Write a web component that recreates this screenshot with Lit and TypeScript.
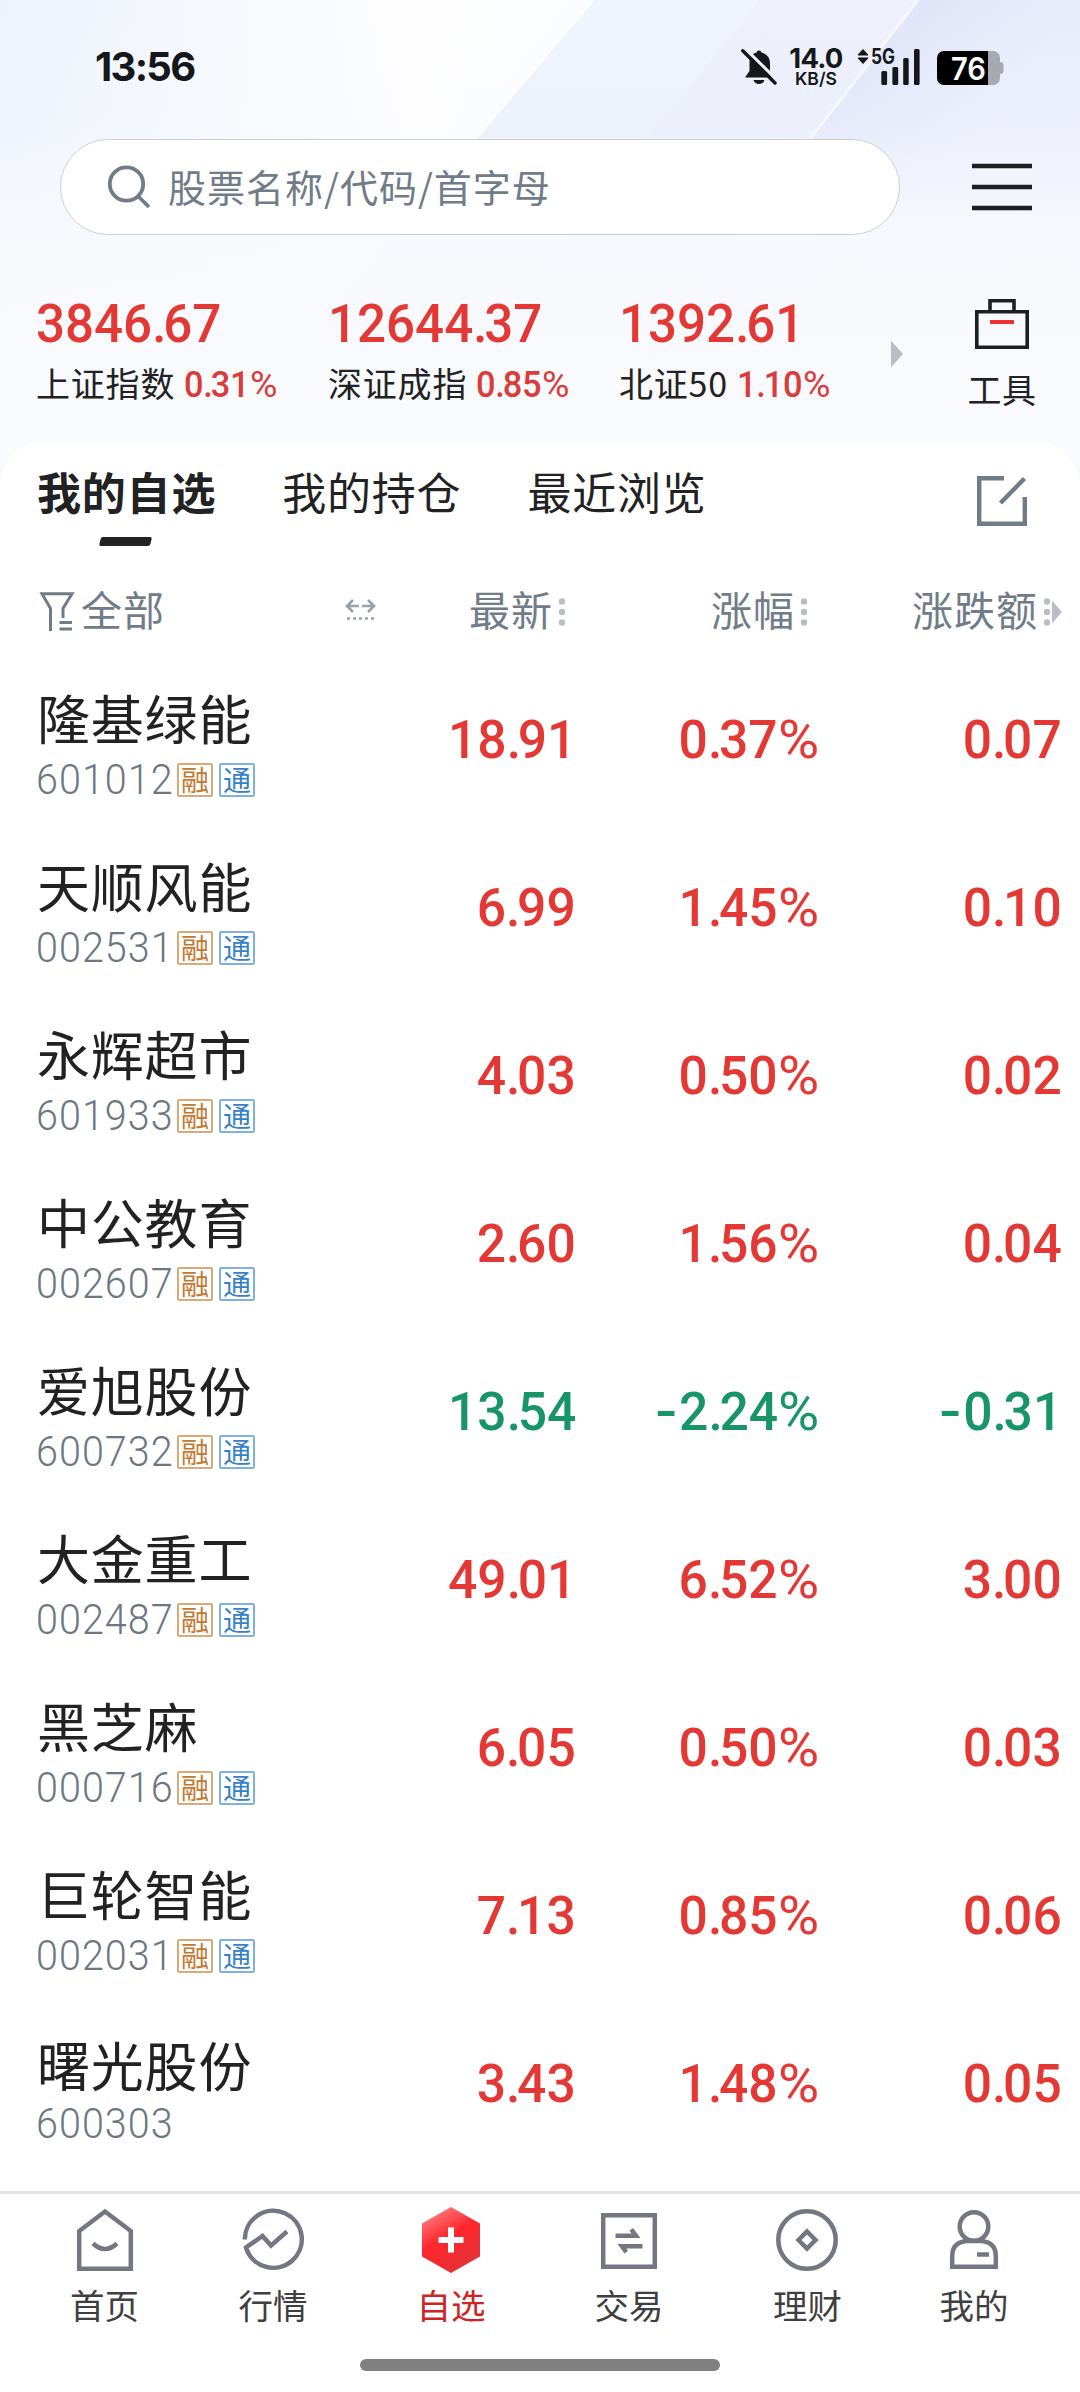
import { LitElement, html, svg, css, nothing } from "lit";
import { customElement, property } from "lit/decorators.js";

interface Quote {
  name: string;
  code: string;
  price: string;
  pct: string;
  diff: string;
  tags: boolean;
}

const INDICES = [
  { value: "3846.67", name: "上证指数", pct: "0.31%" },
  { value: "12644.37", name: "深证成指", pct: "0.85%" },
  { value: "1392.61", name: "北证50", pct: "1.10%" },
];

const QUOTES: Quote[] = [
  { name: "隆基绿能", code: "601012", price: "18.91", pct: "0.37%", diff: "0.07", tags: true },
  { name: "天顺风能", code: "002531", price: "6.99", pct: "1.45%", diff: "0.10", tags: true },
  { name: "永辉超市", code: "601933", price: "4.03", pct: "0.50%", diff: "0.02", tags: true },
  { name: "中公教育", code: "002607", price: "2.60", pct: "1.56%", diff: "0.04", tags: true },
  { name: "爱旭股份", code: "600732", price: "13.54", pct: "-2.24%", diff: "-0.31", tags: true },
  { name: "大金重工", code: "002487", price: "49.01", pct: "6.52%", diff: "3.00", tags: true },
  { name: "黑芝麻", code: "000716", price: "6.05", pct: "0.50%", diff: "0.03", tags: true },
  { name: "巨轮智能", code: "002031", price: "7.13", pct: "0.85%", diff: "0.06", tags: true },
  { name: "曙光股份", code: "600303", price: "3.43", pct: "1.48%", diff: "0.05", tags: false },
];

const cjk = css`"Noto Sans CJK SC", sans-serif`;

/** A condensed figure whose point, percent sign and minus sign have their own spacing. */
@customElement("stock-figure")
class StockFigure extends LitElement {
  @property() value = "";

  static styles = css`
    :host {
      display: inline-block;
      font-family: Roboto, sans-serif;
      font-weight: 500;
      line-height: 1;
      white-space: nowrap;
      transform: scaleX(0.955);
      transform-origin: left;
    }
    .point { letter-spacing: -0.063em; }
    .percent { display: inline-block; font-weight: 400; transform: scaleX(1.09); transform-origin: left; margin-right: 0.065em; }
    .minus { display: inline-block; transform: scaleX(1.25); transform-origin: right; margin-right: 0.04em; }
  `;

  render() {
    const parts = this.value.split(/([.%-])/).filter((p) => p);
    return parts.map((p) =>
      p === "." ? html`<span class="point">.</span>`
      : p === "%" ? html`<span class="percent">%</span>`
      : p === "-" ? html`<span class="minus">-</span>`
      : p);
  }
}

@customElement("status-bar")
class StatusBar extends LitElement {
  static styles = css`
    :host { display: flex; justify-content: space-between; height: 139px; box-sizing: border-box; padding: 46px 76px 0 95px; color: #15171a; }
    .time { font: 700 40px/41px Inter, sans-serif; letter-spacing: -1.7px; }
    .right { display: flex; align-items: flex-start; padding-top: 2px; }
    svg { display: block; }
    .bell { margin-right: 12px; }
    .speed { display: flex; flex-direction: column; align-items: center; width: 54px; margin-right: 14px; font-family: Inter, sans-serif; font-weight: 700; }
    .rate { font-size: 27.5px; line-height: 22px; letter-spacing: -0.8px; margin-top: -1px; }
    .unit { font-size: 17.5px; line-height: 16px; font-weight: 600; margin-top: 2px; }
    .signal { margin-top: -8px; }
    .battery { margin-left: 17px; }
  `;

  render() {
    return html`
      <div class="time">13:56</div>
      <div class="right">
        <svg class="bell" width="36" height="38" viewBox="0 0 36 38">
          <path d="M18 2.5c1.4 0 2.2.8 2.3 2 5.3 1.1 8.7 5 8.700 10.500v8l3.500 6.500H4l4.500-6.500v-8c0-5.500 2.200-9.400 7.200-10.500.1-1.200.9-2 2.300-2z" fill="#15171a"/>
          <path d="M12.500 32h11c-.8 2.700-2.800 4-5.500 4s-4.700-1.300-5.500-4z" fill="#15171a"/>
          <path d="M3 -.5L37 33" stroke="#eef1fb" stroke-width="3.200"/>
          <path d="M1.800 2.800L34 35" stroke="#15171a" stroke-width="3.400" stroke-linecap="round"/>
        </svg>
        <div class="speed"><span class="rate">14.0</span><span class="unit">KB/S</span></div>
        <svg class="signal" width="63" height="46" viewBox="0 -8 63 46">
          <path d="M6 1.500l5 5.500H1zM1 10h10l-5 5.500z" fill="#15171a" stroke="#15171a" stroke-linejoin="round"/>
          <text x="14" y="16" font-family="Inter, sans-serif" font-weight="700" font-size="21" textLength="24" lengthAdjust="spacingAndGlyphs" fill="#15171a">5G</text>
          <rect x="24.300" y="23" width="5.800" height="14" rx="1.500" fill="#15171a"/>
          <rect x="35.400" y="19" width="5.800" height="18" rx="1.500" fill="#15171a"/>
          <rect x="46.200" y="10" width="5.500" height="27" rx="1.500" fill="#15171a"/>
          <rect x="57" y="1" width="5.600" height="36" rx="1.500" fill="#15171a"/>
        </svg>
        <svg class="battery" width="67" height="38" viewBox="0 0 67 38">
          <path d="M51 3h5a7 7 0 0 1 7 7v4h.5a3 3 0 0 1 3 3v6a3 3 0 0 1-3 3H63v4a7 7 0 0 1-7 7h-5z" fill="#a6a9b1"/>
          <path d="M7 3h44v34H7a7 7 0 0 1-7-7V10a7 7 0 0 1 7-7z" fill="#000"/>
          <text x="14" y="31.500" font-family="Inter, sans-serif" font-weight="600" font-size="31" textLength="35" lengthAdjust="spacingAndGlyphs" fill="#fff">76</text>
        </svg>
      </div>
    `;
  }
}

@customElement("search-row")
class SearchRow extends LitElement {
  static styles = css`
    :host { display: flex; align-items: center; justify-content: space-between; padding: 0 48px 0 60px; }
    .box { display: flex; align-items: center; gap: 17px; box-sizing: border-box; width: 840px; height: 96px; padding-left: 46px; border: 1px solid #c9d1d8; border-radius: 48px; background: #fff; }
    .hint { font: 400 38px/48px ${cjk}; letter-spacing: 1px; color: #707c88; padding-bottom: 3px; }
    svg { display: block; flex: none; }
  `;

  render() {
    return html`
      <div class="box">
        <svg width="44" height="44" viewBox="0 0 44 44" fill="none" stroke="#707c88" stroke-width="3.800">
          <circle cx="19.500" cy="19" r="16.700"/><path d="M31 31l11 11"/>
        </svg>
        <span class="hint">股票名称/代码/首字母</span>
      </div>
      <svg width="60" height="48" viewBox="0 0 60 48" stroke="#1d1f21" stroke-width="4.600"><path d="M0 3h60M0 24h60M0 45h60"/></svg>
    `;
  }
}

@customElement("index-strip")
class IndexStrip extends LitElement {
  static styles = css`
    :host { display: flex; height: 206px; padding-left: 36px; }
    .indices { display: grid; grid-template-columns: 292px 291px 272px; padding-top: 62px; align-content: start; }
    .value { font-size: 53.500px; color: #e33834; height: 54px; display: block; }
    .line { display: flex; align-items: center; gap: 9px; height: 44px; margin-top: 11px; }
    .name { font: 400 34px/44px ${cjk}; letter-spacing: 0.8px; color: #222; padding-bottom: 2px; }
    .pct { font-size: 36px; letter-spacing: -0.200px; color: #d93c3a; margin-top: 1px; }
    .arrow { margin-top: 105px; }
    .tools { display: flex; flex-direction: column; align-items: center; width: 110px; margin-left: 44px; padding-top: 64px; }
    .label { font: 400 34px/44px ${cjk}; color: #222; margin-top: 18px; letter-spacing: 0.600px; }
    svg { display: block; flex: none; }
  `;

  render() {
    return html`
      <div class="indices">
        ${INDICES.map((i) => html`
          <div>
            <stock-figure class="value" .value=${i.value}></stock-figure>
            <div class="line"><span class="name">${i.name}</span><stock-figure class="pct" .value=${i.pct}></stock-figure></div>
          </div>`)}
      </div>
      <svg class="arrow" width="12" height="28" viewBox="0 0 12 28"><path d="M0 .5L12 14 0 27.500z" fill="#b9bec6"/></svg>
      <div class="tools">
        <svg width="54" height="50" viewBox="0 0 54 50" fill="none" stroke="#1d1f21" stroke-width="3.600">
          <path d="M1.800 12.800h50.400v35.400H1.800zM15 12V1.800h24V12"/>
          <path d="M15 23h24" stroke="#f03030" stroke-width="4"/>
        </svg>
        <span class="label">工具</span>
      </div>
    `;
  }
}

@customElement("tab-row")
class TabRow extends LitElement {
  static styles = css`
    :host { display: flex; justify-content: space-between; height: 127px; box-sizing: border-box; padding: 20px 53px 0 37px; }
    .tabs { display: flex; gap: 66px; }
    .tab { font: 400 44px/60px ${cjk}; letter-spacing: 0.8px; color: #222; height: 96px; display: flex; flex-direction: column; align-items: center; }
    .active { font-weight: 700; }
    .active::after { content: ""; width: 51px; height: 9px; margin-top: 16px; margin-right: 2px; border-radius: 2px; background: #222; transform: skewX(-14deg); }
    .edit { margin-top: 15px; }
  `;

  render() {
    return html`
      <div class="tabs">
        <div class="tab active">我的自选</div><div class="tab">我的持仓</div><div class="tab">最近浏览</div>
      </div>
      <svg class="edit" width="50" height="50" viewBox="0 0 50 50" fill="none" stroke="#707c88" stroke-width="4.400">
        <path d="M27 2.200H2.200v45.600h45.600V21M23.500 27L47.500 2.500"/>
      </svg>
    `;
  }
}

@customElement("column-head")
class ColumnHead extends LitElement {
  static styles = css`
    :host { display: grid; grid-template-columns: 305px 222px 242px 254px; height: 87px; align-items: center; padding-left: 39px; font: 400 41px/60px ${cjk}; letter-spacing: 1px; color: #707c88; }
    .first { display: flex; align-items: center; gap: 6px; }
    .text { margin-top: -8px; }
    .col { display: flex; align-items: center; justify-content: flex-end; gap: 5px; }
    svg { display: block; flex: none; }
  `;

  private sort(more = false) {
    return html`<svg width=${more ? 19 : 8} height="32" viewBox=${more ? "0 0 19 32" : "0 0 8 32"} fill="#b9bec6">
      <circle cx="4" cy="5.500" r="3.200"/><circle cx="4" cy="16" r="3.200"/><circle cx="4" cy="26.500" r="3.200"/>
      ${more ? svg`<path d="M9 4.500L19 16 9 27.500z"/>` : nothing}
    </svg>`;
  }

  render() {
    return html`
      <div class="first">
        <svg width="36" height="39" viewBox="0 0 36 39" fill="none" stroke="#707c88" stroke-width="3">
          <path d="M11.500 39V16.500L3 1.800h30L24 16.500V26M20.500 30.500h12.500M20.500 37H33"/>
        </svg>
        <span class="text">全部</span>
      </div>
      <div class="col"><span class="text">最新</span>${this.sort()}</div>
      <div class="col"><span class="text">涨幅</span>${this.sort()}</div>
      <div class="col"><span class="text">涨跌额</span>${this.sort(true)}</div>
    `;
  }
}

@customElement("quote-row")
class QuoteRow extends LitElement {
  @property({ attribute: false }) quote!: Quote;

  static styles = css`
    :host { display: grid; grid-template-columns: 339px 200px 243px 243px; height: 168px; padding-left: 37px; align-items: center; }
    .stock { padding-top: 8px; }
    .untagged { padding-top: 11px; }
    .name { font: 400 53px/54px ${cjk}; letter-spacing: 0.800px; color: #222; height: 54px; }
    .meta { display: flex; align-items: center; height: 34px; margin-top: 19px; }
    .untagged .meta { margin-top: 16px; }
    .code { font: 350 42.500px/34px Roboto, sans-serif; letter-spacing: 1.100px; color: #6b7783; width: 140px; transform: scaleX(0.93); transform-origin: left; margin-left: -1px; margin-right: 1px; padding-top: 1px; }
    .tag { box-sizing: border-box; width: 36px; height: 34px; border: 2px solid; border-radius: 2px; font: 400 28px/28px ${cjk}; display: flex; justify-content: center; margin-right: 6px; }
    .margin { color: #c4782c; border-color: #dba977; }
    .connect { color: #3780c8; border-color: #7fb1de; }
    .figure { justify-self: end; font-size: 54px; color: #e33834; transform-origin: right; margin-top: 2px; }
    .down { color: #179566; }
  `;

  render() {
    const q = this.quote;
    const cls = q.diff.startsWith("-") ? "figure down" : "figure";
    return html`
      <div class=${q.tags ? "stock" : "stock untagged"}>
        <div class="name">${q.name}</div>
        <div class="meta">
          <span class="code">${q.code}</span>
          ${q.tags ? html`<span class="tag margin">融</span><span class="tag connect">通</span>` : nothing}
        </div>
      </div>
      <stock-figure class=${cls} .value=${q.price}></stock-figure>
      <stock-figure class=${cls} .value=${q.pct}></stock-figure>
      <stock-figure class=${cls} .value=${q.diff}></stock-figure>
    `;
  }
}

const NAV = [
  { label: "首页", icon: svg`<path d="M9.200 65.800V28L35 8.500 60.800 28v37.800zM23 40.500q12 11 24 0"/>` },
  { label: "行情", icon: svg`<path d="M6.800 36.500A28.500 28.500 0 1 1 8 44.500L24.500 33l8.500 9.500L49 28.500"/>` },
  { label: "自选", active: true, icon: svg`
      <defs><linearGradient id="hex" x1="0.100" y1="0" x2="0.600" y2="1">
        <stop offset="0" stop-color="#ff8a8c"/><stop offset="0.500" stop-color="#fe262b"/><stop offset="1" stop-color="#e23238"/>
      </linearGradient></defs>
      <path d="M35 4l29 16.500v33L35 70 6 53.500v-33z" fill="url(#hex)" stroke="none"/>
      <path d="M35 24.500v25M22.500 37h25" stroke="#fff" stroke-width="6"/>` },
  { label: "交易", icon: svg`<path d="M9.200 12.200h51.600v51.600H9.200z"/><path d="M21.500 30.500h16l-2-3 3.500-2.500 7.500 10h-25zM48.500 41v4.500h-16l1.500 2.500-3.500 2.500L23.500 41z" fill="#747682" stroke="none"/>` },
  { label: "理财", icon: svg`<circle cx="34" cy="37" r="28.700"/><path d="M34 28.500l8.500 8.500-8.500 8.500-8.500-8.500z"/>` },
  { label: "我的", icon: svg`<circle cx="35" cy="23.500" r="14.300"/><path d="M13.200 63.800V53q0-13.500 14-15h15.600q14 1.500 14 15v10.800zM38 51.500h12"/>` },
];

@customElement("bottom-nav")
class BottomNav extends LitElement {
  static styles = css`
    :host { display: block; box-sizing: border-box; height: 201px; border-top: 3px solid #e4e4e4; background: #fff; }
    .items { display: grid; grid-template-columns: 169px 168px 188px 168px 189px 144px; padding-left: 20px; height: 165px; }
    .item { display: flex; flex-direction: column; align-items: center; padding-top: 9px; box-sizing: border-box; }
    .label { font: 400 34.500px/46px ${cjk}; color: #3f3f3f; margin-top: 4px; }
    .active { color: #cc2526; }
    .handle { width: 360px; height: 12px; margin: 0 auto; border-radius: 6px; background: #808080; }
    svg { display: block; }
  `;

  render() {
    return html`
      <div class="items">
        ${NAV.map((n) => html`
          <div class="item">
            <svg width="70" height="74" viewBox="0 0 70 74" fill="none" stroke="#747682" stroke-width="4.500">${n.icon}</svg>
            <span class="label ${n.active ? "active" : ""}">${n.label}</span>
          </div>`)}
      </div>
      <div class="handle"></div>
    `;
  }
}

@customElement("app-root")
class AppRoot extends LitElement {
  static styles = css`
    :host { display: flex; flex-direction: column; position: relative; width: 1080px; height: 2392px; overflow: hidden; background: #f9fafe; }
    .backdrop { position: absolute; top: 0; left: 0; }
    .head { position: relative; }
    .sheet { position: relative; flex: 1; display: flex; flex-direction: column; background: #fff; border-radius: 46px 46px 0 0; }
    .resize { position: absolute; left: 345px; top: 157px; }
    bottom-nav { position: relative; flex: none; }
  `;

  render() {
    return html`
      <svg class="backdrop" width="1080" height="500" viewBox="0 0 1080 500">
        <defs>
          <linearGradient id="base" x1="0" x2="1"><stop offset="0" stop-color="#edf2fc"/><stop offset="0.380" stop-color="#fefefe"/><stop offset="0.600" stop-color="#fafcfe"/></linearGradient>
          <linearGradient id="b1" gradientUnits="userSpaceOnUse" x1="0" y1="0" x2="0" y2="139"><stop offset="0" stop-color="#f1f5fd"/><stop offset="1" stop-color="#eaeefb"/></linearGradient>
          <linearGradient id="b2" gradientUnits="userSpaceOnUse" x1="0" y1="0" x2="0" y2="139"><stop offset="0" stop-color="#eef1fb"/><stop offset="1" stop-color="#e8ecfa"/></linearGradient>
          <linearGradient id="b3" gradientUnits="userSpaceOnUse" x1="880" y1="0" x2="1000" y2="100"><stop offset="0" stop-color="#dde2f8"/><stop offset="1" stop-color="#e9edfb"/></linearGradient>
          <linearGradient id="fade" x1="0" y1="0" x2="0" y2="1"><stop offset="0" stop-color="#f8fafe" stop-opacity="0"/><stop offset="0.260" stop-color="#f8fafe" stop-opacity="0.250"/><stop offset="0.460" stop-color="#f7f9fd" stop-opacity="0.930"/><stop offset="1" stop-color="#fafbfe"/></linearGradient>
        </defs>
        <path d="M0 0h1080v500H0z" fill="url(#base)"/>
        <path d="M595 0h485v500H171z" fill="url(#b1)"/>
        <path d="M760 0h320v500H343z" fill="url(#b2)"/>
        <path d="M919 0h161v500H530z" fill="url(#b3)"/>
        <path d="M918 0L810 139" stroke="#f6f8fe" stroke-width="3"/>
        <path d="M0 0h1080v500H0z" fill="url(#fade)"/>
      </svg>
      <div class="head">
        <status-bar></status-bar>
        <search-row></search-row>
        <index-strip></index-strip>
      </div>
      <div class="sheet">
        <tab-row></tab-row>
        <column-head></column-head>
        <svg class="resize" width="31" height="24" viewBox="0 0 31 24" fill="none" stroke="#98a1ab" stroke-width="2.600">
          <path d="M14 8H2M8 2L2 8l6 6M17 8h12M23 2l6 6-6 6"/><path d="M2 20.500h28" stroke-dasharray="3 3"/>
        </svg>
        ${QUOTES.map((q) => html`<quote-row .quote=${q}></quote-row>`)}
      </div>
      <bottom-nav></bottom-nav>
    `;
  }
}
